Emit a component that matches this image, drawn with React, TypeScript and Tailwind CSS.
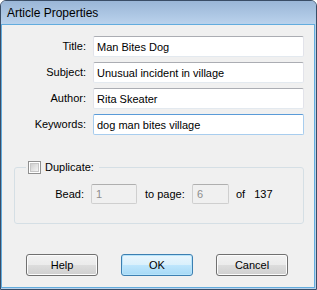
import React from 'react';

const font = { fontFamily: '"Liberation Sans", Arial, sans-serif' };

function Field({ label, value, focused = false }) {
	return (
		<div className="flex h-[21px] items-center">
			<span className="w-[84px] text-right">{label}</span>
			<input
				readOnly
				value={value}
				className={
					focused
						? 'ml-[7px] h-[21px] w-[211px] rounded-[2px] border border-[#a8cdee] border-t-[#5a9bd8] bg-white px-[3px] text-[11px] text-black outline-none'
						: 'ml-[7px] h-[21px] w-[211px] rounded-[2px] border border-[#e2e3ea] border-t-[#abadb3] border-b-[#e3e9ef] bg-white px-[3px] text-[11px] text-black outline-none'
				}
				style={font}
			/>
		</div>
	);
}

function DisabledBox({ value, width }) {
	return (
		<div
			className={`flex h-[20px] items-center rounded-[2px] border border-[#cfcfcf] border-t-[#afafaf] px-[4px] text-[#8d8d8d] ${width}`}
		>
			{value}
		</div>
	);
}

function DialogButton({ children, primary = false }) {
	return (
		<button
			className={
				primary
					? 'h-[22px] w-[72px] rounded-[3px] border border-[#3c7fb1] bg-[linear-gradient(#eaf6fd_0%,#d9f0fc_50%,#bee6fd_50%,#a7d9f5_100%)] text-[11px] text-black shadow-[inset_0_0_0_1px_#b7e4fb]'
					: 'h-[22px] w-[72px] rounded-[3px] border border-[#707070] bg-[linear-gradient(#f2f2f2_0%,#ebebeb_50%,#dddddd_50%,#cfcfcf_100%)] text-[11px] text-black shadow-[inset_0_0_0_1px_#fcfcfc]'
			}
			style={font}
		>
			{children}
		</button>
	);
}

export default function App() {
	return (
		<div
			className="flex h-[290px] w-[317px] flex-col overflow-hidden rounded-t-[6px] border border-[#3a4d66] bg-[#b9d1ea] text-[11px] text-black"
			style={font}
		>
			{/* title bar */}
			<div className="flex h-[23px] shrink-0 items-center bg-[linear-gradient(#9ab6d7,#bad2ec)] pl-[6px] text-[12px] text-black">
				Article Properties
			</div>

			<div className="mr-[1px] mb-[1px] flex flex-1 flex-col border border-[#62acde] bg-[#f0f0f0]">
				<div className="flex flex-col gap-[5px] pt-[11px]">
					<Field label="Title:" value="Man Bites Dog" />
					<Field label="Subject:" value="Unusual incident in village" />
					<Field label="Author:" value="Rita Skeater" />
					<Field label="Keywords:" value="dog man bites village" focused />
				</div>

				<fieldset className="mt-[25px] ml-[12px] w-[290px] rounded-[3px] border border-[#d5dfe5] p-0">
					<legend className="ml-[11px] flex h-[15px] items-center px-[2px]">
						<span className="flex h-[13px] w-[13px] items-center justify-center border border-[#8f8f8f] bg-white">
							<span className="h-[9px] w-[9px] border border-[#c6c6c6] bg-[linear-gradient(135deg,#cfcfcf,#f4f4f4)]" />
						</span>
						<span className="ml-[4px] pr-[3px]">Duplicate:</span>
					</legend>
					<div className="flex items-center pt-[9px] pb-[19px]">
						<span className="w-[69px] text-right">Bead:</span>
						<div className="ml-[7px]">
							<DisabledBox value="1" width="w-[46px]" />
						</div>
						<span className="w-[55px] pl-[8px]">to page:</span>
						<DisabledBox value="6" width="w-[37px]" />
						<span className="ml-[7px]">of</span>
						<span className="ml-[9px]">137</span>
					</div>
				</fieldset>

				<div className="mt-[30px] ml-[24px] flex gap-[23px]">
					<DialogButton>Help</DialogButton>
					<DialogButton primary>OK</DialogButton>
					<DialogButton>Cancel</DialogButton>
				</div>
			</div>
		</div>
	);
}
